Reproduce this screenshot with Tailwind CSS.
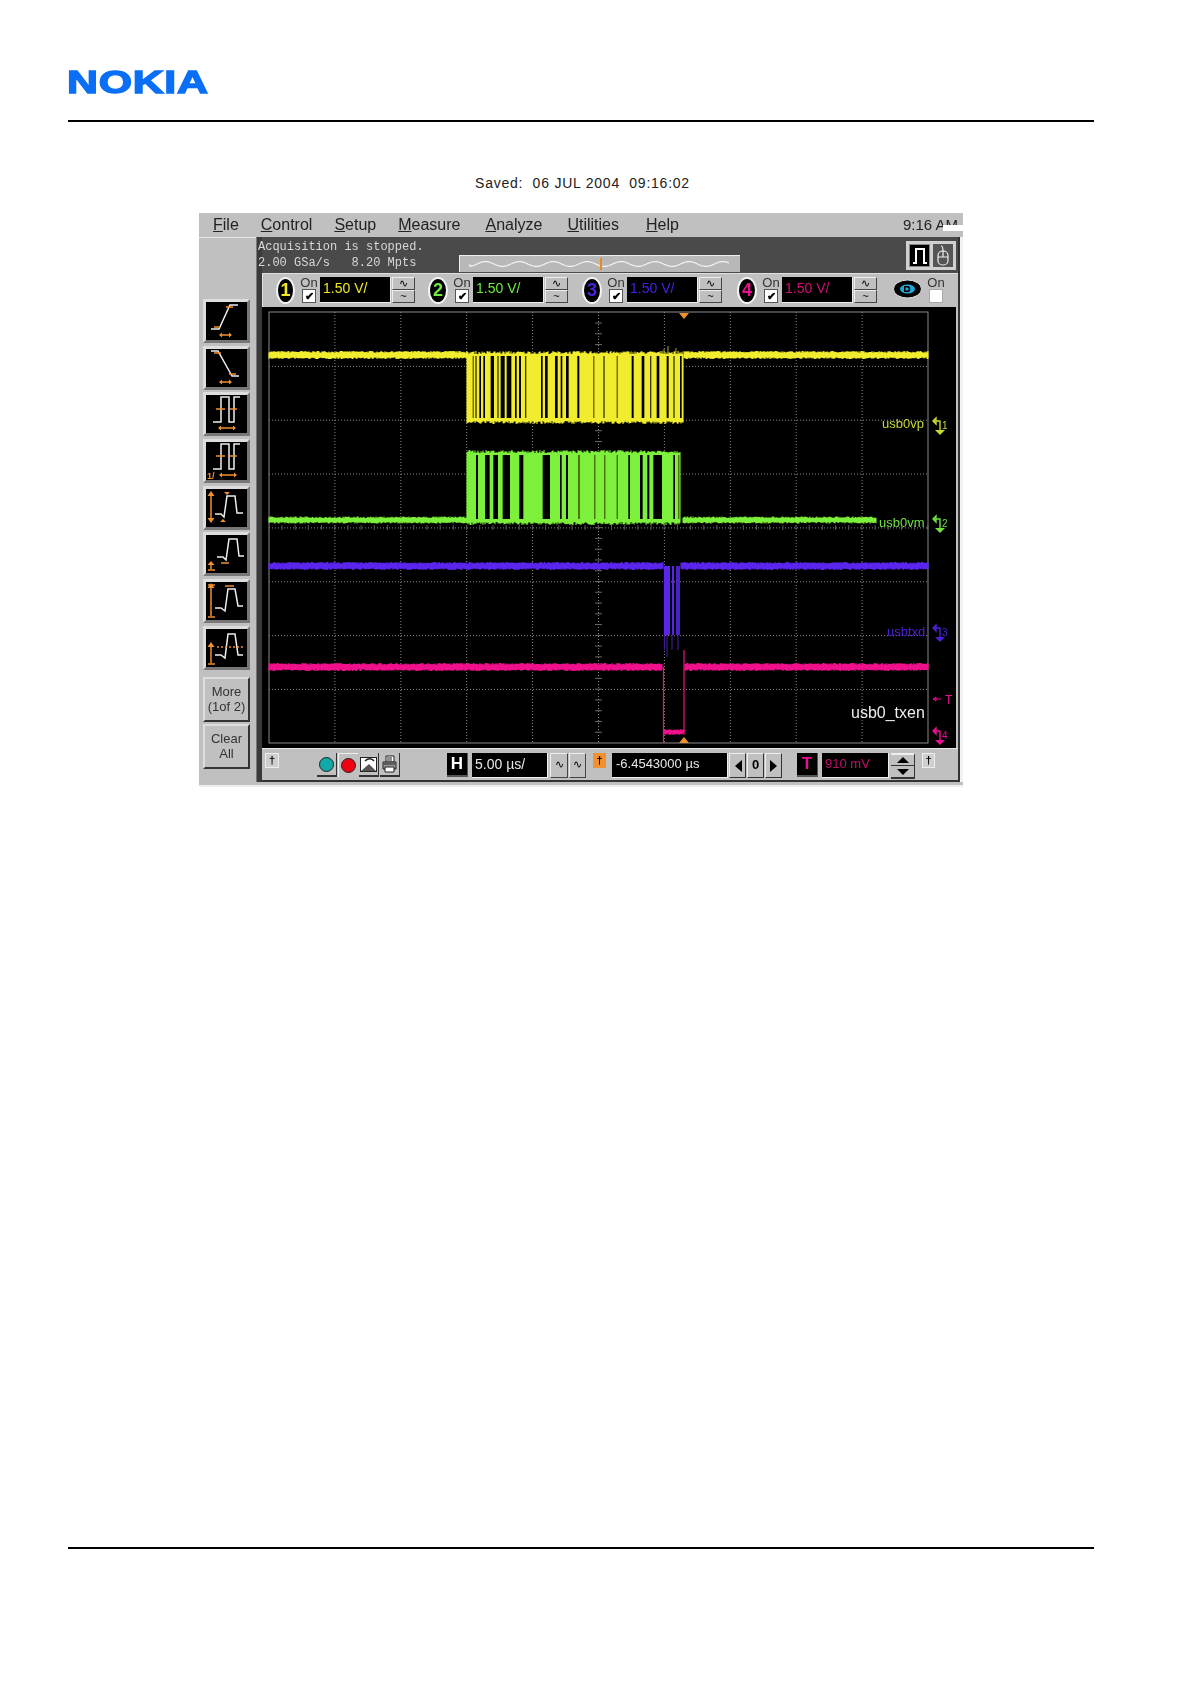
<!DOCTYPE html>
<html lang="en">
<head>
  <meta charset="UTF-8" />
  <title>Saved scope capture</title>
  <script src="https://cdn.jsdelivr.net/npm/@tailwindcss/browser@4"></script>
</head>
<body class="bg-white font-['Liberation_Sans',sans-serif]">
<div class="w-[1191px] h-[1684px] overflow-hidden px-[68px] pt-[64px]">
  <!-- header -->
  <div class="h-[36px] flex items-center">
    <span class="-ml-[1px] text-[32px] leading-[36px] font-bold text-[#0a6ff5] scale-x-[1.34] origin-left tracking-[0.5px] [-webkit-text-stroke:1.4px_#0a6ff5]">NOKIA</span>
  </div>
  <div class="h-[2px] w-[1026px] bg-black mt-[20px]"></div>
  <p class="w-[1026px] text-center text-[14px] leading-[18px] tracking-[0.77px] text-[#222] mt-[52px] pl-[3px] whitespace-pre">Saved:  06 JUL 2004  09:16:02</p>

  <!-- scope window -->
  <div class="relative w-[764px] h-[574px] ml-[131px] mt-[21px] bg-[#c0c0c0] overflow-hidden blur-[0.35px]">
    <div class="flex h-[24px] items-center text-[16px] text-[#222] whitespace-nowrap">
      <span class="ml-[14px]"><u>F</u>ile</span>
      <span class="ml-[22px]"><u>C</u>ontrol</span>
      <span class="ml-[22px]"><u>S</u>etup</span>
      <span class="ml-[22px]"><u>M</u>easure</span>
      <span class="ml-[25px]"><u>A</u>nalyze</span>
      <span class="ml-[25px]"><u>U</u>tilities</span>
      <span class="ml-[27px]"><u>H</u>elp</span>
      <span class="ml-[224px] text-[15px]">9:16 AM</span>
    </div>
    <div class="absolute right-0 top-[12px] w-[20px] h-[6px] bg-white"></div>

    <div class="flex h-[545px]">
      <!-- left softkeys -->
      <div class="w-[57px] shrink-0 border-t border-[#e8e8e8] pt-[61px] pl-[4px]">
        <div class="flex flex-col gap-[2.7px]">
          <div class="w-[47px] h-[44px] border-[3px] border-t-[#ddd] border-l-[#ddd] border-r-[#777] border-b-[#777] bg-black">
            <svg viewBox="0 0 41 38" class="w-full h-full" fill="none" stroke-width="1.5"><path d="M5 27h8L24 3h8" stroke="#eee"/><path d="M8 25h6M20 5h7M15 33h9" stroke="#f09030"/><path d="M13 33l3-2.500v5zM26 33l-3-2.500v5z" fill="#f09030"/></svg>
          </div>
          <div class="w-[47px] h-[44px] border-[3px] border-t-[#ddd] border-l-[#ddd] border-r-[#777] border-b-[#777] bg-black">
            <svg viewBox="0 0 41 38" class="w-full h-full" fill="none" stroke-width="1.5"><path d="M5 2h7l14 25h7" stroke="#eee"/><path d="M8 4h7M23 25h7M15 33h9" stroke="#f09030"/><path d="M13 33l3-2.500v5zM26 33l-3-2.500v5z" fill="#f09030"/></svg>
          </div>
          <div class="w-[47px] h-[44px] border-[3px] border-t-[#ddd] border-l-[#ddd] border-r-[#777] border-b-[#777] bg-black">
            <svg viewBox="0 0 41 38" class="w-full h-full" fill="none" stroke-width="1.5"><path d="M7 27h8V2h8v25h5V2h6" stroke="#eee"/><path d="M10 14h9M24 14h7M14 33h14" stroke="#f09030"/><path d="M12 33l3-2.500v5zM30 33l-3-2.500v5z" fill="#f09030"/></svg>
          </div>
          <div class="w-[47px] h-[44px] border-[3px] border-t-[#ddd] border-l-[#ddd] border-r-[#777] border-b-[#777] bg-black">
            <svg viewBox="0 0 41 38" class="w-full h-full" fill="none" stroke-width="1.5"><path d="M7 27h8V2h8v25h5V2h6" stroke="#eee"/><path d="M10 14h9M24 14h7M15 33h14" stroke="#f09030"/><path d="M13 33l3-2.500v5zM31 33l-3-2.500v5z" fill="#f09030"/><text x="1" y="37" font-size="9" font-weight="700" fill="#f09030" font-family="Liberation Sans">1/</text></svg>
          </div>
          <div class="w-[47px] h-[44px] border-[3px] border-t-[#ddd] border-l-[#ddd] border-r-[#777] border-b-[#777] bg-black">
            <svg viewBox="0 0 41 38" class="w-full h-full" fill="none" stroke-width="1.5"><path d="M9 25h6l3 3 3-21h8l2 17h6" stroke="#eee"/><path d="M5 6v24" stroke="#f09030"/><path d="M5 2l3.500 5h-7zM5 34l3.500-5h-7z" fill="#f09030"/><path d="M18 3h6l-3 3zM14 33h6l-3-3z" fill="#f09030"/></svg>
          </div>
          <div class="w-[47px] h-[44px] border-[3px] border-t-[#ddd] border-l-[#ddd] border-r-[#777] border-b-[#777] bg-black">
            <svg viewBox="0 0 41 38" class="w-full h-full" fill="none" stroke-width="1.5"><path d="M11 22h6l3 3 3-21h8l2 17h5" stroke="#eee"/><path d="M5 30v4M2 35h7M15 28h8" stroke="#f09030"/><path d="M5 26l3.500 4h-7z" fill="#f09030"/></svg>
          </div>
          <div class="w-[47px] h-[44px] border-[3px] border-t-[#ddd] border-l-[#ddd] border-r-[#777] border-b-[#777] bg-black">
            <svg viewBox="0 0 41 38" class="w-full h-full" fill="none" stroke-width="1.5"><path d="M9 26h6l4 3 3-22h7l3 17h5" stroke="#eee"/><path d="M5 5v29M2 3h7M2 35h7M19 4h9" stroke="#f09030"/><path d="M5 1l3.500 5h-7z" fill="#f09030"/></svg>
          </div>
          <div class="w-[47px] h-[44px] border-[3px] border-t-[#ddd] border-l-[#ddd] border-r-[#777] border-b-[#777] bg-black">
            <svg viewBox="0 0 41 38" class="w-full h-full" fill="none" stroke-width="1.5"><path d="M9 26h6l4 3 3-24h7l3 21h5" stroke="#eee"/><path d="M5 18v16M2 35h7" stroke="#f09030"/><path d="M11 18h26" stroke="#f09030" stroke-dasharray="2 2"/><path d="M5 13l3.500 5h-7z" fill="#f09030"/></svg>
          </div>
        </div>
        <div class="w-[47px] h-[45px] mt-[7px] border-2 border-t-[#ddd] border-l-[#ddd] border-r-[#333] border-b-[#333] flex items-center justify-center text-center text-[13px] leading-[15px] text-[#333]">More<br>(1of 2)</div>
        <div class="w-[47px] h-[45px] mt-[2px] border-2 border-t-[#ddd] border-l-[#ddd] border-r-[#333] border-b-[#333] flex items-center justify-center text-center text-[13px] leading-[15px] text-[#333]">Clear<br>All</div>
      </div>
      <div class="w-[6px] shrink-0 bg-[#3a3a3a] border-l border-[#777]"></div>

      <!-- main column -->
      <div class="w-[698px] shrink-0 flex flex-col border-r-2 border-b-2 border-[#333]">
        <div class="h-[36px] bg-[#4a4a4a] flex shrink-0">
          <div class="w-[201px] -ml-[4px] pt-[2px] font-['Liberation_Mono',monospace] text-[12px] leading-[16px] text-[#d8d8d8] whitespace-pre shrink-0">Acquisition is stopped.<br>2.00 GSa/s   8.20 Mpts</div>
          <div class="w-[281px] h-[17px] mt-[18px] bg-[#b8b8b8] border-t border-l border-[#eee] relative shrink-0">
            <svg id="overview" viewBox="0 0 281 17" class="w-[281px] h-[17px]"></svg>
            <div class="absolute left-[140px] top-[2px] w-[2px] h-[12px] bg-[#e88a20]"></div>
          </div>
          <div class="ml-[166px] mt-[4px] h-[29px] w-[50px] bg-[#d0d0d0] flex gap-[3px] p-[3px] shrink-0">
            <div class="w-[21px] h-[23px] bg-black border border-[#888] flex items-center justify-center">
              <svg viewBox="0 0 18 20" class="w-[18px] h-[20px]" fill="none" stroke="#fff" stroke-width="2"><path d="M2 17h3V3h8v14h3"/></svg>
            </div>
            <div class="w-[20px] h-[23px] bg-[#555] flex items-center justify-center">
              <svg viewBox="0 0 16 22" class="w-[16px] h-[22px]" fill="none" stroke="#eee" stroke-width="1.200"><rect x="3" y="6" width="10" height="14" rx="4.500"/><path d="M3 12h10M8 6v6M6 1c1 0 2 2 2 5"/></svg>
            </div>
          </div>
        </div>

        <!-- channel row -->
        <div class="h-[34px] shrink-0 flex items-start pt-[3px] pl-[13px] border-t border-l border-[#e0e0e0]">
          <div class="w-[19px] h-[27px] rounded-[50%] bg-black border-2 border-[#f4f4f4] flex items-center justify-center text-[18px] font-bold text-[#f0e820]">1</div>
          <div class="w-[16px] ml-[6px] flex flex-col items-center"><span class="text-[13px] leading-[12px] text-[#333]">On</span><div class="w-[14px] h-[14px] bg-white border border-[#555] flex items-center justify-center text-[11px] leading-none font-bold text-black">✔</div></div>
          <div class="w-[71px] h-[26px] ml-[3px] bg-black border-b border-r border-[#eee] pl-[3px] text-[14px] leading-[23px] text-[#f0e820]">1.50 V/</div>
          <div class="w-[23px] ml-[1px] flex flex-col"><div class="h-[13px] border border-t-[#eee] border-l-[#eee] border-r-[#444] border-b-[#444] text-[11px] leading-[10px] text-center text-black">∿</div><div class="h-[13px] border border-t-[#eee] border-l-[#eee] border-r-[#444] border-b-[#444] text-[11px] leading-[10px] text-center text-black">~</div></div>

          <div class="w-[20px] h-[27px] ml-[13px] rounded-[50%] bg-black border-2 border-[#f4f4f4] flex items-center justify-center text-[18px] font-bold text-[#70e840]">2</div>
          <div class="w-[16px] ml-[6px] flex flex-col items-center"><span class="text-[13px] leading-[12px] text-[#333]">On</span><div class="w-[14px] h-[14px] bg-white border border-[#555] flex items-center justify-center text-[11px] leading-none font-bold text-black">✔</div></div>
          <div class="w-[71px] h-[26px] ml-[3px] bg-black border-b border-r border-[#eee] pl-[3px] text-[14px] leading-[23px] text-[#70e840]">1.50 V/</div>
          <div class="w-[23px] ml-[1px] flex flex-col"><div class="h-[13px] border border-t-[#eee] border-l-[#eee] border-r-[#444] border-b-[#444] text-[11px] leading-[10px] text-center text-black">∿</div><div class="h-[13px] border border-t-[#eee] border-l-[#eee] border-r-[#444] border-b-[#444] text-[11px] leading-[10px] text-center text-black">~</div></div>

          <div class="w-[20px] h-[27px] ml-[14px] rounded-[50%] bg-black border-2 border-[#f4f4f4] flex items-center justify-center text-[18px] font-bold text-[#4a20e0]">3</div>
          <div class="w-[16px] ml-[6px] flex flex-col items-center"><span class="text-[13px] leading-[12px] text-[#333]">On</span><div class="w-[14px] h-[14px] bg-white border border-[#555] flex items-center justify-center text-[11px] leading-none font-bold text-black">✔</div></div>
          <div class="w-[71px] h-[26px] ml-[3px] bg-black border-b border-r border-[#eee] pl-[3px] text-[14px] leading-[23px] text-[#4a20e0]">1.50 V/</div>
          <div class="w-[23px] ml-[1px] flex flex-col"><div class="h-[13px] border border-t-[#eee] border-l-[#eee] border-r-[#444] border-b-[#444] text-[11px] leading-[10px] text-center text-black">∿</div><div class="h-[13px] border border-t-[#eee] border-l-[#eee] border-r-[#444] border-b-[#444] text-[11px] leading-[10px] text-center text-black">~</div></div>

          <div class="w-[20px] h-[27px] ml-[15px] rounded-[50%] bg-black border-2 border-[#f4f4f4] flex items-center justify-center text-[18px] font-bold text-[#e81090]">4</div>
          <div class="w-[16px] ml-[6px] flex flex-col items-center"><span class="text-[13px] leading-[12px] text-[#333]">On</span><div class="w-[14px] h-[14px] bg-white border border-[#555] flex items-center justify-center text-[11px] leading-none font-bold text-black">✔</div></div>
          <div class="w-[71px] h-[26px] ml-[3px] bg-black border-b border-r border-[#eee] pl-[3px] text-[14px] leading-[23px] text-[#d01070]">1.50 V/</div>
          <div class="w-[23px] ml-[1px] flex flex-col"><div class="h-[13px] border border-t-[#eee] border-l-[#eee] border-r-[#444] border-b-[#444] text-[11px] leading-[10px] text-center text-black">∿</div><div class="h-[13px] border border-t-[#eee] border-l-[#eee] border-r-[#444] border-b-[#444] text-[11px] leading-[10px] text-center text-black">~</div></div>

          <svg viewBox="0 0 29 20" class="w-[29px] h-[20px] ml-[16px] mt-[2px]"><ellipse cx="14.500" cy="10" rx="14" ry="9" fill="#000" stroke="#ddd"/><ellipse cx="14.500" cy="10" rx="7.500" ry="4.500" fill="#20a8d8"/><path d="M11 7h4c3 0 3 6 0 6h-4z" fill="#000"/><path d="M12.500 8.500h2c1.500 0 1.500 3 0 3h-2z" fill="#20a8d8"/></svg>
          <div class="w-[16px] ml-[6px] flex flex-col items-center"><span class="text-[13px] leading-[12px] text-[#333]">On</span><div class="w-[14px] h-[14px] bg-white border border-[#aaa]"></div></div>
        </div>

        <!-- trace area -->
        <svg id="scope" viewBox="262 307 694 441" class="w-[694px] h-[441px] shrink-0 bg-black block"></svg>

        <!-- bottom controls -->
        <div class="flex-1 flex items-start pt-[4px] pl-[3px] border-t border-[#e8e8e8]">
          <div class="w-[14px] h-[15px] bg-[#cfcfcf] border border-[#eee] text-[11px] leading-[13px] text-center font-bold text-black">†</div>

          <div class="ml-[38px] w-[20px] h-[24px] border-b-2 border-r border-[#333] flex items-center justify-center"><div class="w-[15px] h-[15px] rounded-full bg-[#10a8a8] border border-[#222]"></div></div>
          <div class="ml-[1px] w-[20px] h-[24px] border-t border-l border-[#eee] flex items-center justify-center"><div class="w-[15px] h-[15px] rounded-full bg-[#f00010] border border-[#222]"></div></div>
          <div class="ml-[1px] w-[20px] h-[24px] border-b-2 border-r border-[#333] flex items-center justify-center">
            <svg viewBox="0 0 17 15" class="w-[17px] h-[15px]"><rect x=".5" y=".5" width="16" height="14" fill="#fff" stroke="#222"/><path d="M1 14L9 7l7 7z" fill="#555"/><path d="M5 4c3-3 7-3 9 0" fill="none" stroke="#222" stroke-width="1.500"/></svg>
          </div>
          <div class="ml-[1px] w-[20px] h-[24px] border-b-2 border-r border-[#333] flex items-center justify-center">
            <svg viewBox="0 0 17 18" class="w-[17px] h-[18px]"><path d="M5 1h8v6H5z" fill="#fff" stroke="#222"/><path d="M2 7h13v7H2z" fill="#999" stroke="#222"/><path d="M4 12h9v5H4z" fill="#fff" stroke="#222"/><path d="M3 9h11M6 3h5M6 5h5" stroke="#222"/></svg>
          </div>

          <div class="ml-[47px] w-[21px] h-[24px] border-b-2 border-r border-[#555] bg-black flex items-center justify-center text-[17px] font-bold text-white">H</div>
          <div class="ml-[4px] w-[76px] h-[25px] bg-black border-b border-r border-[#eee] pl-[3px] text-[14px] leading-[22px] text-[#e8e8e8]">5.00 µs/</div>
          <div class="ml-[2px] w-[18px] h-[25px] border border-t-[#eee] border-l-[#eee] border-r-[#444] border-b-[#444] text-[11px] leading-[21px] text-center text-black">∿</div>
          <div class="ml-[1px] w-[17px] h-[25px] border border-t-[#eee] border-l-[#eee] border-r-[#444] border-b-[#444] text-[11px] leading-[21px] text-center text-black">∿</div>

          <div class="ml-[7px] w-[13px] h-[15px] bg-[#f09030] text-[11px] leading-[14px] text-center font-bold text-black">†</div>
          <div class="ml-[6px] w-[116px] h-[25px] bg-black border-b border-r border-[#eee] pl-[4px] text-[13px] leading-[22px] text-[#e8e8e8]">-6.4543000 µs</div>
          <div class="ml-[1px] w-[17px] h-[25px] border border-t-[#eee] border-l-[#eee] border-r-[#333] border-b-[#333] flex items-center justify-center"><svg viewBox="0 0 8 12" class="w-[8px] h-[12px]"><path d="M8 0v12L1 6z"/></svg></div>
          <div class="ml-[1px] w-[17px] h-[25px] border border-t-[#eee] border-l-[#eee] border-r-[#333] border-b-[#333] text-center text-[13px] leading-[21px] font-bold text-black">0</div>
          <div class="ml-[1px] w-[17px] h-[25px] border border-t-[#eee] border-l-[#eee] border-r-[#333] border-b-[#333] flex items-center justify-center"><svg viewBox="0 0 8 12" class="w-[8px] h-[12px]"><path d="M0 0v12l7-6z"/></svg></div>

          <div class="ml-[15px] w-[21px] h-[24px] border-b-2 border-r border-[#555] bg-black flex items-center justify-center text-[17px] font-bold text-[#e81090]">T</div>
          <div class="ml-[4px] w-[67px] h-[25px] bg-black border-b border-r border-[#eee] pl-[3px] text-[13px] leading-[22px] text-[#c01068]">910 mV</div>
          <div class="ml-[2px] w-[24px] flex flex-col">
            <div class="h-[13px] border-b border-r border-[#333] border-t-2 border-t-[#eee] flex items-center justify-center"><svg viewBox="0 0 12 6" class="w-[12px] h-[6px]"><path d="M0 6h12L6 0z"/></svg></div>
            <div class="h-[13px] border-b-2 border-r border-[#333] flex items-center justify-center"><svg viewBox="0 0 12 6" class="w-[12px] h-[6px]"><path d="M0 0h12L6 6z"/></svg></div>
          </div>
          <div class="ml-[7px] w-[13px] h-[15px] bg-[#cfcfcf] border border-[#eee] text-[11px] leading-[13px] text-center font-bold text-black">†</div>
        </div>
      </div>
      <div class="w-[3px] shrink-0 bg-[#f2f2f2]"></div>
    </div>
    <div class="h-[5px] border-b-2 border-[#eee]"></div>
  </div>

  <div class="h-[2px] w-[1026px] bg-black mt-[760px]"></div>
</div>

<script>
  // seeded so the noise comes out the same on every load
  let seed = 7;
  function rnd() {
    seed = (seed * 16807) % 2147483647;
    return seed / 2147483647;
  }

  function band(x0, x1, y, h, color) {
    let d = "";
    for (let x = x0; x <= x1; x += 1) {
      const a = y - h / 2 - rnd() * 1.6;
      const b = y + h / 2 + rnd() * 1.6;
      d += `M${x} ${a.toFixed(1)}V${b.toFixed(1)}`;
    }
    return `<path d="${d}" stroke="${color}" stroke-width="1.1" fill="none"/>`;
  }

  function burst(x0, x1, top, bottom, gaps, color) {
    let out = "";
    let d = "";
    for (let x = x0; x <= x1; x += 1) {
      d += `M${x} ${(top - rnd() * 3).toFixed(1)}V${(bottom + rnd() * 3).toFixed(1)}`;
    }
    out += `<path d="${d}" stroke="${color}" stroke-width="1.1" fill="none"/>`;
    gaps.forEach(([zx, w]) => {
      // narrow gaps read as dim slits, not pure black
      const fill = w < 5 ? "#3a3a00" : "#000";
      out += `<rect x="${440 + zx / 3}" y="${top + 2}" width="${w / 3}" height="${bottom - top - 5}" fill="${fill}"/>`;
    });
    return out;
  }

  let s = "";
  // graticule
  for (let i = 1; i < 10; i++) {
    const x = 269 + i * 65.9;
    s += `<path d="M${x} 312V743" stroke="#8a8a8a" stroke-dasharray="1 2"/>`;
  }
  for (let i = 1; i < 8; i++) {
    const y = 312.5 + i * 53.85;
    s += `<path d="M269 ${y}H928" stroke="#8a8a8a" stroke-dasharray="1 2"/>`;
  }
  for (let y = 323; y < 743; y += 10.77) {
    s += `<path d="M595 ${y}h7" stroke="#666"/>`;
  }
  for (let x = 282; x < 928; x += 13.18) {
    s += `<path d="M${x} 525v5" stroke="#555"/>`;
  }
  s += `<rect x="269" y="312" width="659" height="431" fill="none" stroke="#8a8a8a"/>`;

  // yellow channel
  const yellow = "#f2ec2e";
  s += band(269, 467, 355, 5, yellow) + band(684, 928, 355, 5, yellow);
  s += burst(467, 683, 354, 421, [[98,3],[106,4],[118,5],[130,5],[152,10],[172,4],[182,12],[200,14],[225,5],[237,6],[255,4],[303,5],[315,8],[345,8],[362,5],[378,8],[412,6],[460,3],[490,4],[530,3],[575,6],[605,8],[630,4],[650,8],[680,6],[700,4],[720,5]], yellow);
  s += `<path d="M664 349V354M668 346V354M676 348V354" stroke="#b0a828"/>`;

  // green channel
  const green = "#7cf03a";
  s += band(269, 467, 520, 4, green) + band(683, 876, 520, 4, green);
  s += burst(467, 680, 453, 522, [[108,6],[135,14],[160,14],[188,22],[238,12],[308,22],[360,5],[378,6],[415,4],[463,3],[493,3],[530,3],[565,5],[600,8],[622,6],[640,26],[700,5],[715,3]], green);

  // blue channel
  const blue = "#5a26ee";
  s += band(269, 663, 566, 5, blue) + band(681, 928, 566, 5, blue);
  s += `<rect x="664" y="566" width="6" height="69" fill="${blue}"/><rect x="672" y="566" width="2" height="69" fill="${blue}"/><rect x="676" y="566" width="4" height="69" fill="#4a20c8"/>`;
  s += `<path d="M664.500 635V650M667 635V657M672 635V650M678 635V650" stroke="#3c1c90" stroke-width="1.200"/>`;

  // magenta channel
  const pink = "#f0108c";
  s += band(269, 662, 667, 5, pink) + band(685, 928, 667, 5, pink);
  s += band(664, 684, 732, 3, pink);
  s += `<path d="M663.500 667V743M684 650V732" stroke="${pink}" stroke-width="1.200"/>`;

  // time reference markers
  s += `<path d="M679 313h10l-5 6z" fill="#f09030"/><path d="M679 743h10l-5-6z" fill="#f09030"/>`;

  // labels
  const font = `font-family="Liberation Sans"`;
  s += `<text x="882" y="428" font-size="13" ${font} fill="#c8d830">usb0vp</text>`;
  s += `<text x="879" y="527" font-size="13" ${font} fill="#70e040">usb0vm</text>`;
  s += `<text x="887" y="636" font-size="13" ${font} fill="#4c20d8">usbtxd</text>`;
  s += `<text x="851" y="718" font-size="16" ${font} fill="#eee">usb0_txen</text>`;
  s += `<text x="945" y="704" font-size="12" ${font} fill="#e81090">T</text><path d="M933 699h8M933 699l3-2v4z" stroke="#e81090"/>`;

  [[419, "1", "#c8d830"], [517, "2", "#70e040"], [626, "3", "#4c20d8"], [729, "4", "#e81090"]].forEach(([y, n, c]) => {
    s += `<path d="M933 ${y + 2}h7v10M933 ${y + 2}l3-3v6z" fill="none" stroke="${c}" stroke-width="1.400"/><path d="M935 ${y + 11}h10l-5 5z" fill="${c}"/>`;
    s += `<text x="942" y="${y + 10}" font-size="10" ${font} fill="${c}">${n}</text>`;
  });
  document.getElementById("scope").innerHTML = s;

  // little overview wave in the status bar
  let wave = "M10 8";
  for (let x = 10; x < 270; x += 1) {
    wave += `L${x} ${(8 + 2.4 * Math.sin(x / 5.4)).toFixed(1)}`;
  }
  document.getElementById("overview").innerHTML = `<path d="${wave}" fill="none" stroke="#f2f2f2" stroke-width="1.200"/>`;
</script>
</body>
</html>
